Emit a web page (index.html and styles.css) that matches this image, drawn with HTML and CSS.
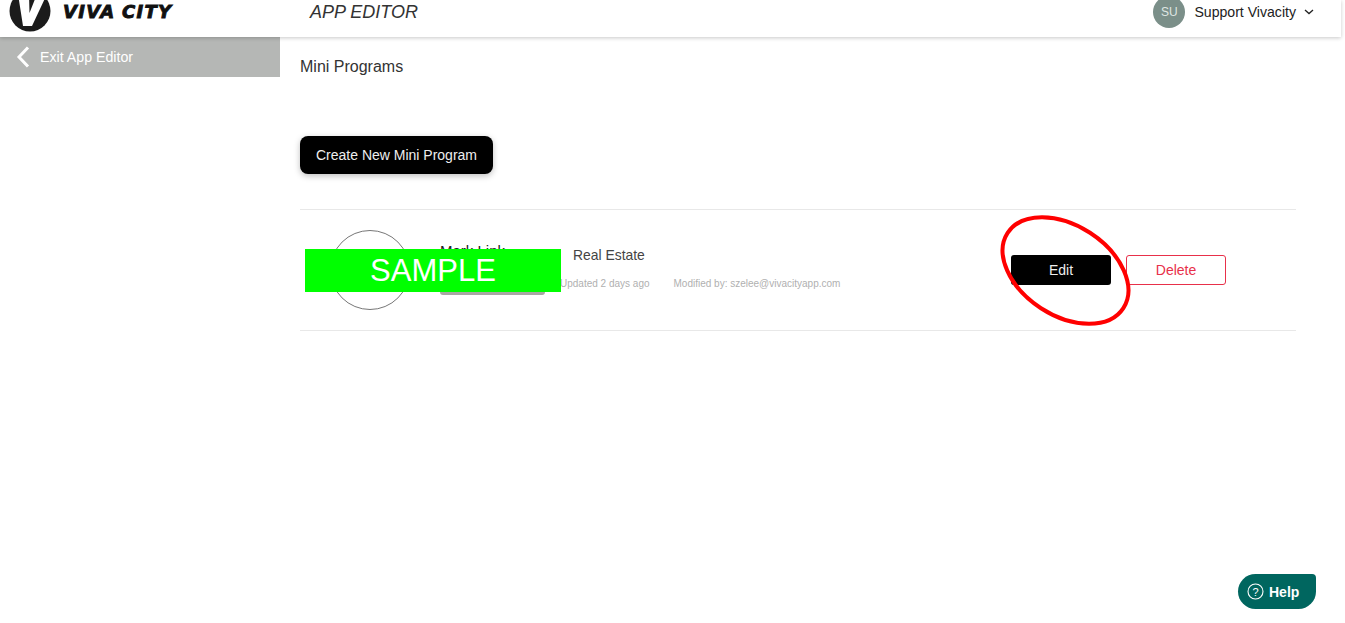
FILE: index.html
```html
<!DOCTYPE html>
<html lang="en">
<head>
<meta charset="utf-8">
<title>App Editor</title>
<link rel="stylesheet" href="styles.css">
</head>
<body>
<header class="topbar">
  <div class="brand">
    <svg class="brand-mark" width="42" height="32" viewBox="0 0 42 32">
      <circle cx="21" cy="11" r="20.5" fill="#1b1b1b"/>
      <path d="M9 -6 H20 L20.500 13 L28 -6 H38 L23 26 H14 Z" fill="#fff"/>
    </svg>
    <span class="brand-name">VIVA CITY</span>
  </div>
  <div class="app-title">APP EDITOR</div>
  <div class="user">
    <span class="avatar">SU</span>
    <span class="user-name">Support Vivacity</span>
    <svg class="caret" width="10" height="6" viewBox="0 0 10 6"><path d="M1 1l4 3.6L9 1" fill="none" stroke="#222" stroke-width="1.3"/></svg>
  </div>
</header>
<div class="layout">
  <aside class="sidebar">
    <a class="exit">
      <svg width="14" height="22" viewBox="0 0 14 22"><path d="M12 1.500L3 11l9 9.500" fill="none" stroke="#fff" stroke-width="3"/></svg>
      <span>Exit App Editor</span>
    </a>
  </aside>
  <main class="main">
    <h1 class="heading">Mini Programs</h1>
    <button class="create">Create New Mini Program</button>
    <section class="row">
      <div class="thumb"></div>
      <div class="info">
        <div class="info-name">Mark Link</div>
        <div class="info-tag"></div>
      </div>
      <div class="meta">
        <div class="category">Real Estate</div>
        <div class="meta-line">
          <span>Updated 2 days ago</span>
          <span>Modified by: szelee@vivacityapp.com</span>
        </div>
      </div>
      <div class="actions">
        <button class="edit">Edit</button>
        <button class="delete">Delete</button>
      </div>
    </section>
  </main>
</div>
<div class="sample">SAMPLE</div>
<svg class="circle-mark" width="135" height="115" viewBox="0 0 135 115">
  <ellipse cx="67.500" cy="57.500" rx="69" ry="45" transform="rotate(33 67.500 57.500)" fill="none" stroke="#f00" stroke-width="4"/>
</svg>
<button class="help">
  <svg width="17" height="17" viewBox="0 0 17 17"><circle cx="8.500" cy="8.500" r="7.500" fill="none" stroke="#fff" stroke-width="1.100"/><text x="8.500" y="12.500" text-anchor="middle" class="help-q">?</text></svg>
  <span>Help</span>
</button>
</body>
</html>
```
FILE: styles.css
```css
* { box-sizing: border-box; }
html, body { margin: 0; height: 100%; }
body {
  position: relative;
  width: 1345px;
  height: 623px;
  overflow: hidden;
  background: #fff;
  font-family: "Liberation Sans", Arial, sans-serif;
  color: #333;
}
button { font-family: inherit; cursor: pointer; }

.topbar {
  position: relative;
  z-index: 2;
  display: flex;
  align-items: center;
  width: 1341px;
  height: 37px;
  background: #fff;
  box-shadow: 0 1px 4px rgba(0, 0, 0, .22);
}
.brand { display: flex; align-items: flex-start; width: 310px; height: 37px; padding-left: 9px; }
.brand-mark { display: block; }
.brand-name {
  margin: 2px 0 0 12px;
  font-family: "DejaVu Sans", sans-serif;
  font-weight: 700;
  font-style: italic;
  font-size: 18px;
  line-height: 20px;
  letter-spacing: 1.3px;
  word-spacing: -1px;
  color: #111;
  -webkit-text-stroke: .9px #111;
}
.app-title { font-size: 18px; font-style: italic; color: #333; margin-top: -12px; }
.user { display: flex; align-items: center; margin-left: auto; margin-right: 27px; margin-top: -14px; }
.avatar {
  display: flex;
  align-items: center;
  justify-content: center;
  width: 32px;
  height: 32px;
  margin-left: -1px;
  border-radius: 50%;
  background: #7b8f89;
  color: #dfe6e3;
  font-size: 12px;
}
.user-name { margin-left: 9px; font-size: 14.1px; color: #222; }
.caret { margin-left: 8px; }

.layout { display: flex; height: 586px; }
.sidebar { flex: 0 0 280px; }
.exit {
  display: flex;
  align-items: center;
  height: 40px;
  padding-left: 16px;
  background: #b5b7b5;
  color: #fff;
  font-size: 14.2px;
}
.exit span { margin-left: 10px; }

.main { width: 996px; margin-left: 20px; }
.heading { margin: 20px 0 0; font-size: 16px; font-weight: 400; line-height: 20px; color: #333; }
.create {
  display: block;
  width: 193px;
  height: 38px;
  margin-top: 59px;
  border: 0;
  border-radius: 8px;
  background: #000;
  color: #eee;
  font-size: 14px;
  box-shadow: 0 2px 6px rgba(0, 0, 0, .25);
}
.row {
  position: relative;
  display: flex;
  align-items: flex-start;
  height: 122px;
  margin-top: 35px;
  border-top: 1px solid #e8e8e8;
  border-bottom: 1px solid #e8e8e8;
}
.thumb { width: 80px; height: 80px; margin: 20px 0 0 30px; border: 1px solid #777; border-radius: 50%; flex: none; }
.info { width: 133px; margin-left: 30px; padding-top: 32px; flex: none; }
.info-name { font-size: 15px; line-height: 18px; color: #222; }
.info-tag { width: 105px; height: 24px; margin-top: 11px; border-radius: 3px; background: #a8a6a3; }
.meta { width: 438px; flex: none; padding-top: 36px; }
.category { font-size: 13.9px; line-height: 18px; color: #444; }
.meta-line {
  display: flex;
  gap: 24px;
  margin-top: 14px;
  margin-left: -13px;
  font-size: 10px;
  line-height: 12px;
  color: #b0b0b0;
}
.actions { display: flex; gap: 15px; padding-top: 45px; flex: none; }
.edit, .delete { width: 100px; height: 30px; border-radius: 3px; font-size: 14px; }
.edit { border: 0; background: #000; color: #eee; }
.delete { background: #fff; border: 1px solid #e8304a; color: #e8304a; }

.sample {
  position: absolute;
  left: 305px;
  top: 249px;
  width: 256px;
  height: 43px;
  background: #0f0;
  color: #fff;
  font-size: 31px;
  line-height: 44px;
  text-align: center;
}
.circle-mark { position: absolute; left: 998px; top: 213px; overflow: visible; }
.help {
  position: absolute;
  left: 1238px;
  top: 574px;
  display: flex;
  align-items: center;
  gap: 5px;
  width: 78px;
  height: 35px;
  padding: 0 0 0 9px;
  border: 0;
  border-radius: 18px 4px 18px 18px;
  background: #00665f;
  color: #fff;
  font-size: 14px;
  font-weight: 700;
}
.help-q { fill: #fff; font-size: 11px; font-weight: 400; font-family: "Liberation Sans", sans-serif; }
```
